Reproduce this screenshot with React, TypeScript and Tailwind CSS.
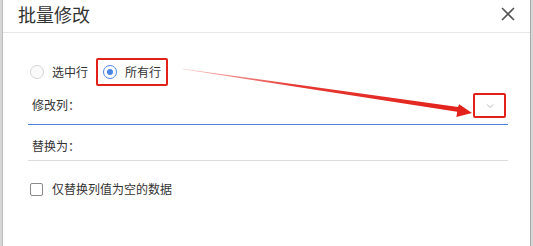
const font = { fontFamily: '"Noto Sans CJK SC", "Microsoft YaHei", sans-serif' };

const Radio = ({ checked }: { checked?: boolean }) => (
  <span
    className={
      checked
        ? "w-[14px] h-[14px] rounded-full border border-[#4a86e8] flex items-center justify-center shrink-0"
        : "block w-[14px] h-[14px] rounded-full border border-[#d4d4d4] bg-[#fafafa] shrink-0"
    }
  >
    {checked && <span className="w-[6px] h-[6px] rounded-full bg-[#4a86e8]" />}
  </span>
);

const App = () => {
  return (
    <div
      className="relative w-[533px] h-[246px] flex bg-[#cfcfcf] overflow-hidden"
      style={font}
    >
      {/* left strip of page behind */}
      <div className="w-[3px] shrink-0 bg-[#d6d6d6] border-r border-[#bdbdbd]" />

      {/* dialog */}
      <div className="w-[527px] shrink-0 bg-white flex flex-col">
        <div className="h-[33px] border-b border-[#e6e6e6] flex items-start justify-between pl-[15px] pr-[15px]">
          <span className="text-[18px] leading-[24px] mt-[2px] text-[#333]">批量修改</span>
          <svg width="14" height="14" viewBox="0 0 14 14" className="mt-[7px]">
            <path d="M1 1 L13 13 M13 1 L1 13" stroke="#555" strokeWidth="1.6" />
          </svg>
        </div>

        <div className="pl-[25px] pr-[22px] flex flex-col text-[12px] text-[#333]">
          {/* radio row */}
          <div className="h-[28px] mt-[25px] flex items-center">
            <span className="ml-[2px] block">
              <Radio />
            </span>
            <span className="ml-[8px] leading-[16px]">选中行</span>
            <div className="ml-[8px] h-[28px] w-[72px] border-2 border-[#e3211b] rounded-[2px] flex items-center pl-[5px]">
              <Radio checked />
              <span className="ml-[8px] leading-[16px]">所有行</span>
            </div>
          </div>

          {/* 修改列 */}
          <div className="mt-[6px] h-[33px] border-b border-[#4f80d4] flex items-start">
            <span className="mt-[5px] ml-[4px] leading-[16px]">修改列：</span>
            <div className="ml-auto mr-[2px] mt-[1px] w-[33px] h-[25px] border-2 border-[#e3211b] rounded-[2px] flex items-center justify-center">
              <svg width="8" height="6" viewBox="0 0 8 6" className="mt-[1px]">
                <path d="M1 1.5 L4 4.5 L7 1.5" stroke="#b5b5b5" strokeWidth="1" fill="none" />
              </svg>
            </div>
          </div>

          {/* 替换为 */}
          <div className="h-[36px] border-b border-[#dcdcdc] flex items-start">
            <span className="mt-[13px] ml-[4px] leading-[16px]">替换为：</span>
          </div>

          {/* checkbox */}
          <div className="mt-[20px] flex items-center">
            <span className="ml-[2px] w-[13px] h-[13px] border border-[#8a8a8a] rounded-[2px] bg-white" />
            <span className="ml-[9px] leading-[16px]">仅替换列值为空的数据</span>
          </div>
        </div>
      </div>

      {/* right strip of page behind */}
      <div className="flex-1 bg-[#d6d6d6] border-l border-[#a9a9a9]" />

      {/* annotation arrow */}
      <svg
        className="absolute inset-0 pointer-events-none"
        width="533"
        height="246"
        viewBox="0 0 533 246"
      >
        <defs>
          <linearGradient id="arrowFade" x1="183" y1="69" x2="470" y2="112" gradientUnits="userSpaceOnUse">
            <stop offset="0" stopColor="#e3211b" stopOpacity="0.25" />
            <stop offset="0.4" stopColor="#e3211b" stopOpacity="0.9" />
            <stop offset="1" stopColor="#e3211b" />
          </linearGradient>
        </defs>
        <polygon
          points="183,68.8 183,69.2 457.2,111.8 456.4,117 472,113 459.2,104.2 458,107"
          fill="url(#arrowFade)"
        />
      </svg>
    </div>
  );
};

export default App;
